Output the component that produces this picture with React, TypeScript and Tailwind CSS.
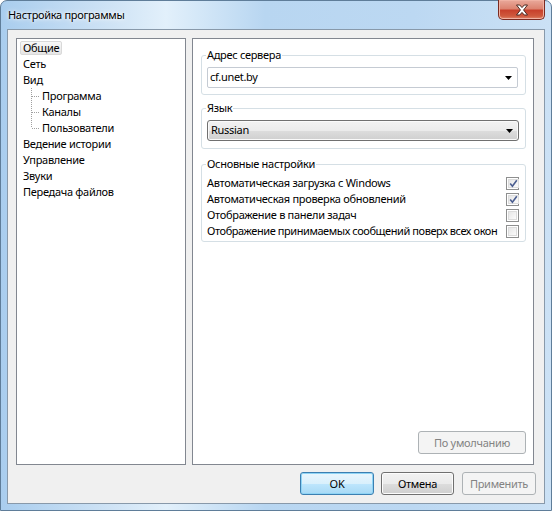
import type React from "react"

const FONT = "font-['Noto_Sans',sans-serif] text-[11px] tracking-[-0.3px]"

const TREE: { label: string; sub?: boolean; last?: boolean; selected?: boolean }[] = [
  { label: "Общие", selected: true },
  { label: "Сеть" },
  { label: "Вид" },
  { label: "Программа", sub: true },
  { label: "Каналы", sub: true },
  { label: "Пользователи", sub: true, last: true },
  { label: "Ведение истории" },
  { label: "Управление" },
  { label: "Звуки" },
  { label: "Передача файлов" },
]

const OPTIONS = [
  { label: "Автоматическая загрузка с Windows", checked: true },
  { label: "Автоматическая проверка обновлений", checked: true },
  { label: "Отображение в панели задач", checked: false },
  { label: "Отображение принимаемых сообщений поверх всех окон", checked: false, tight: true },
]

function Arrow() {
  return (
    <svg width="7" height="4" viewBox="0 0 7 4" className="shrink-0">
      <path d="M0 0h7L3.5 4z" fill="#000" />
    </svg>
  )
}

function Connector({ last }: { last?: boolean }) {
  return (
    <svg width="19" height="16" viewBox="0 0 19 16" className="shrink-0" shapeRendering="crispEdges">
      <line x1="11.5" y1="0" x2="11.5" y2={last ? 8 : 16} stroke="#a0a0a0" strokeDasharray="1 1" />
      <line x1="12" y1="8.5" x2="19" y2="8.5" stroke="#a0a0a0" strokeDasharray="1 1" />
    </svg>
  )
}

function CheckBox({ checked }: { checked: boolean }) {
  return (
    <span className="w-[13px] h-[13px] border border-[#8e8f8f] bg-white p-[1px] shrink-0 flex">
      <span className="flex-1 border border-[#dcdcdc] bg-[linear-gradient(135deg,#e6e6e6,#fbfbfb)] flex items-center justify-center">
        {checked && (
          <svg width="9" height="9" viewBox="0 0 9 9">
            <path d="M1.2 4.6 L3.4 7.2 L7.8 1.2" fill="none" stroke="#4a5d8f" strokeWidth="1.6" />
          </svg>
        )}
      </span>
    </span>
  )
}

function Group({ title, className, children }: { title: string; className?: string; children: React.ReactNode }) {
  return (
    <fieldset className={`border border-[#d5dfe5] rounded-[3px] min-w-0 ${className ?? ""}`}>
      <legend className="px-[1px] -ml-[1px] leading-[16px]">{title}</legend>
      {children}
    </fieldset>
  )
}

function Button({ children, variant, className }: { children: React.ReactNode; variant: "default" | "normal" | "disabled"; className?: string }) {
  const styles = {
    default:
      "border-[#3c7fb1] bg-[linear-gradient(#eaf6fd_0%,#d9f0fc_50%,#bee6fd_51%,#a7d9f5_100%)] shadow-[inset_0_0_0_1px_#8fd4f5] text-black",
    normal:
      "border-[#707070] bg-[linear-gradient(#f2f2f2_0%,#ebebeb_50%,#dddddd_51%,#cfcfcf_100%)] shadow-[inset_0_0_0_1px_#fcfcfc] text-black",
    disabled: "border-[#adb2b5] bg-[#f4f4f4] text-[#838383]",
  }[variant]
  return (
    <div className={`h-[23px] border rounded-[3px] flex items-center justify-center leading-none shrink-0 ${styles} ${className ?? ""}`}>
      {children}
    </div>
  )
}

export default function App() {
  return (
    <div
      className={`${FONT} text-black w-[552px] h-[511px] flex flex-col border border-[#5f7d99] rounded-t-[7px] px-[6px] pb-[6px] bg-[linear-gradient(90deg,#a9cdee_0%,#cfe3f5_20%,#e2f0fb_30%,#b8d6f1_48%,#bcd8f2_75%,#cbe1f5_100%)]`}
    >
      <div className="h-[28px] flex items-start shrink-0">
        <span className="pl-[1px] pt-[6px] leading-[16px] [text-shadow:0_0_6px_#fff,0_0_3px_#fff]">Настройка программы</span>
        <div className="ml-auto -mt-[1px] w-[47px] h-[20px] rounded-b-[5px] border border-[#7b2a20] border-t-0 bg-[linear-gradient(#e9a99b_0%,#dc8471_45%,#c8412c_55%,#cf5a3e_85%,#e0866b_100%)] shadow-[inset_0_0_0_1px_#f0b2a3] flex items-center justify-center">
          <svg width="14" height="12" viewBox="0 0 14 12">
            <path
              d="M1.5 1h3.2L7 3.6 9.3 1h3.2L8.6 6l3.9 5H9.3L7 8.4 4.7 11H1.5l3.9-5z"
              fill="#fff"
              stroke="#4a2820"
              strokeWidth="1"
              strokeLinejoin="round"
            />
          </svg>
        </div>
      </div>

      <div className="flex-1 flex flex-col border border-[#8899aa] bg-[#f0f0f0] pl-[8px] pr-[10px] pt-[8px] pb-[8px]">
        <div className="flex-1 flex gap-[6px]">
          <div className="w-[170px] shrink-0 border border-[#828790] bg-white pt-[1px] pl-[3px]">
            {TREE.map((item) => (
              <div key={item.label} className="h-[16px] flex items-center whitespace-nowrap">
                {item.sub && <Connector last={item.last} />}
                <span
                  className={`h-[14px] px-[2px] border rounded-[2px] flex items-center leading-[12px] ${
                    item.selected
                      ? "border-[#d9d9d9] bg-[linear-gradient(#f8f8f8,#e5e5e5)]"
                      : "border-transparent"
                  }`}
                >
                  {item.label}
                </span>
              </div>
            ))}
          </div>

          <div className="flex-1 min-w-0 border border-[#828790] bg-white flex flex-col pl-[8px] pr-[7px] pt-[8px] pb-[10px]">
            <Group title="Адрес сервера" className="pl-[5px] pr-[7px] pb-[6px]">
              <div className="mt-[4px] h-[21px] border border-[#c5cbd3] rounded-[2px] bg-white flex items-center pl-[2px] pr-[5px]">
                <span className="flex-1">cf.unet.by</span>
                <Arrow />
              </div>
            </Group>

            <Group title="Язык" className="mt-[5px] pl-[5px] pr-[6px] pb-[7px]">
              <div className="mt-[4px] h-[21px] border border-[#707070] rounded-[3px] bg-[linear-gradient(#f2f2f2_0%,#ebebeb_50%,#dddddd_51%,#cfcfcf_100%)] shadow-[inset_0_0_0_1px_#fafafa] flex items-center pl-[3px] pr-[5px]">
                <span className="flex-1">Russian</span>
                <Arrow />
              </div>
            </Group>

            <Group title="Основные настройки" className="mt-[7px] pl-[5px] pr-[6px] pb-[2px]">
              <div className="mt-[3px] flex flex-col">
                {OPTIONS.map((o) => (
                  <div key={o.label} className="h-[16px] flex items-center justify-between whitespace-nowrap">
                    <span className={`leading-[16px] ${o.tight ? "tracking-[-0.42px]" : ""}`}>{o.label}</span>
                    <CheckBox checked={o.checked} />
                  </div>
                ))}
              </div>
            </Group>

            <Button variant="disabled" className="mt-auto self-end w-[108px]">
              По умолчанию
            </Button>
          </div>
        </div>

        <div className="flex justify-end mt-[7px] -mr-[2px]">
          <Button variant="default" className="w-[74px]">OK</Button>
          <Button variant="normal" className="w-[73px] ml-[7px]">Отмена</Button>
          <Button variant="disabled" className="w-[74px] ml-[8px]">Применить</Button>
        </div>
      </div>
    </div>
  )
}
